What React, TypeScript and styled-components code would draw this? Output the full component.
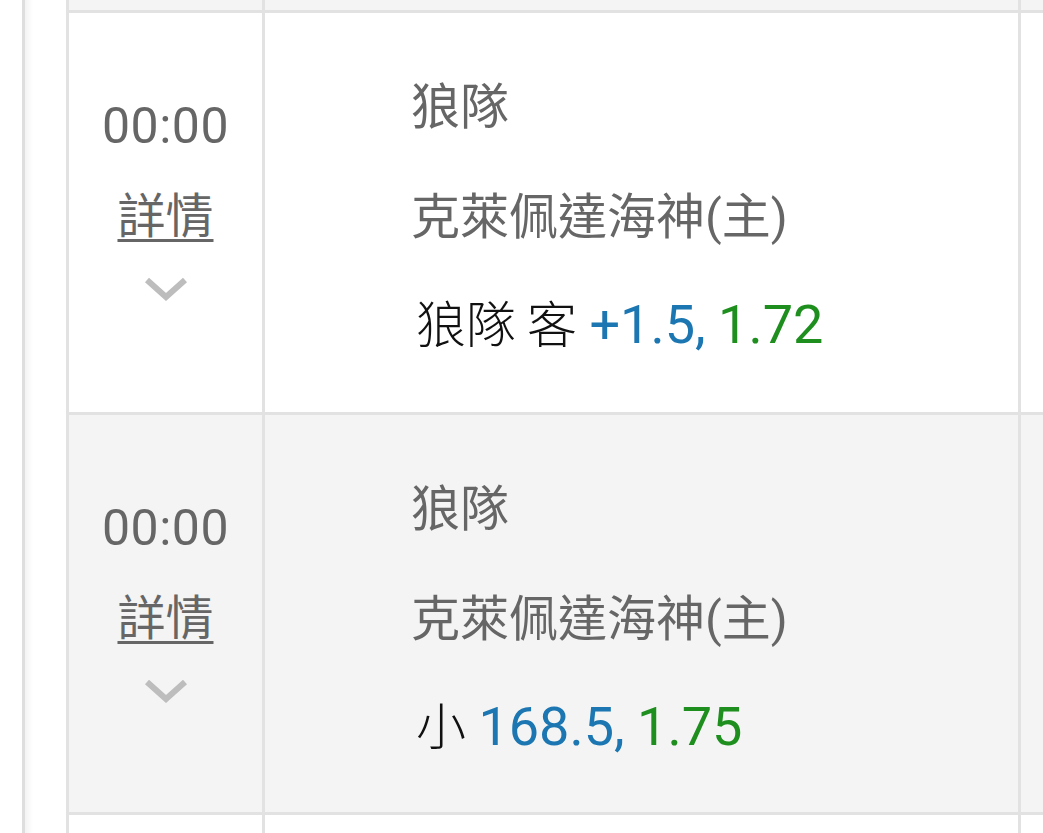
import * as React from 'react'
import styled, { createGlobalStyle } from 'styled-components'

const GlobalStyle = createGlobalStyle`
  html, body {
    margin: 0;
    padding: 0;
    background: #fff;
  }
  body {
    font-family: Roboto, "Noto Sans CJK TC", sans-serif;
    overflow: hidden;
  }
`

interface Match {
  time: string
  away: string
  home: string
  pick: string
  line: string
  odds: string
}

const matches: Match[] = [
  {
    time: '00:00',
    away: '狼隊',
    home: '克萊佩達海神(主)',
    pick: '狼隊 客',
    line: '+1.5,',
    odds: '1.72'
  },
  {
    time: '00:00',
    away: '狼隊',
    home: '克萊佩達海神(主)',
    pick: '小',
    line: '168.5,',
    odds: '1.75'
  }
]

export default function App() {
  return (
    <React.Fragment>
      <GlobalStyle />
      <Page>
        <Gutter>
          <Table>
            <Cell tone="tail" />
            <Cell tone="tail" />
            <Cell tone="tail" />
            {matches.map((m, i) => (
              <React.Fragment key={i}>
                <TimeCell tone={i % 2 ? 'gray' : 'white'}>
                  <Time>{m.time}</Time>
                  <DetailLink href="#">詳情</DetailLink>
                  <Chevron viewBox="0 0 44 24">
                    <path d="M3 3 L22 20 L41 3" />
                  </Chevron>
                </TimeCell>
                <InfoCell tone={i % 2 ? 'gray' : 'white'}>
                  <Team>{m.away}</Team>
                  <Team>{m.home}</Team>
                  <Bet>
                    <Pick>{m.pick}</Pick> <Line>{m.line}</Line>{' '}
                    <Odds>{m.odds}</Odds>
                  </Bet>
                </InfoCell>
                <Cell tone={i % 2 ? 'gray' : 'white'} />
              </React.Fragment>
            ))}
            <Cell tone="white" />
            <Cell tone="white" />
            <Cell tone="white" />
          </Table>
        </Gutter>
      </Page>
    </React.Fragment>
  )
}

const Page = styled.div`
  height: 833px;
  padding-left: 22px;
  overflow: hidden;
`

const Gutter = styled.div`
  height: 100%;
  border-left: 3px solid #dedede;
  padding-left: 41px;
  background: linear-gradient(to right, #f3f3f3 0, #fff 8px, #fff 100%);
`

const Table = styled.div`
  display: grid;
  grid-template-columns: 193px 753px 60px;
  grid-template-rows: 10px 399px 397px 60px;
  gap: 3px;
  padding-left: 3px;
  background: #e2e2e2;
  width: max-content;
`

type Tone = 'white' | 'gray' | 'tail'

const Cell = styled.div<{ tone: Tone }>`
  background: ${props => (props.tone === 'white' ? '#fff' : '#f4f4f4')};
`

const TimeCell = styled(Cell)`
  display: flex;
  flex-direction: column;
  align-items: center;
  padding-top: 78px;
  color: #666;
`

const Time = styled.div`
  font-size: 50px;
  line-height: 70px;
  letter-spacing: 0.5px;
`

const DetailLink = styled.a`
  margin-top: 21px;
  font-size: 48px;
  line-height: 70px;
  color: #666;
  text-decoration: underline;
  text-decoration-thickness: 3px;
  text-underline-offset: 6px;
`

const Chevron = styled.svg`
  margin-top: 25px;
  width: 44px;
  height: 24px;
  fill: none;
  stroke: #bdbdbd;
  stroke-width: 6px;
`

const InfoCell = styled(Cell)`
  display: flex;
  flex-direction: column;
  padding: 40px 0 0 146px;
`

const Team = styled.div`
  font-size: 49px;
  line-height: 110px;
  color: #666;
  white-space: nowrap;
`

const Bet = styled.div`
  margin-top: -4px;
  font-size: 50px;
  line-height: 104px;
  padding-left: 5px;
  white-space: nowrap;
`

const Pick = styled.span`
  color: #111;
  font-family: "Noto Sans CJK TC", sans-serif;
  font-weight: 300;
`

const Line = styled.span`
  color: #1b76b1;
  font-size: 54px;
`

const Odds = styled.span`
  color: #1e8f1e;
  font-size: 54px;
`
